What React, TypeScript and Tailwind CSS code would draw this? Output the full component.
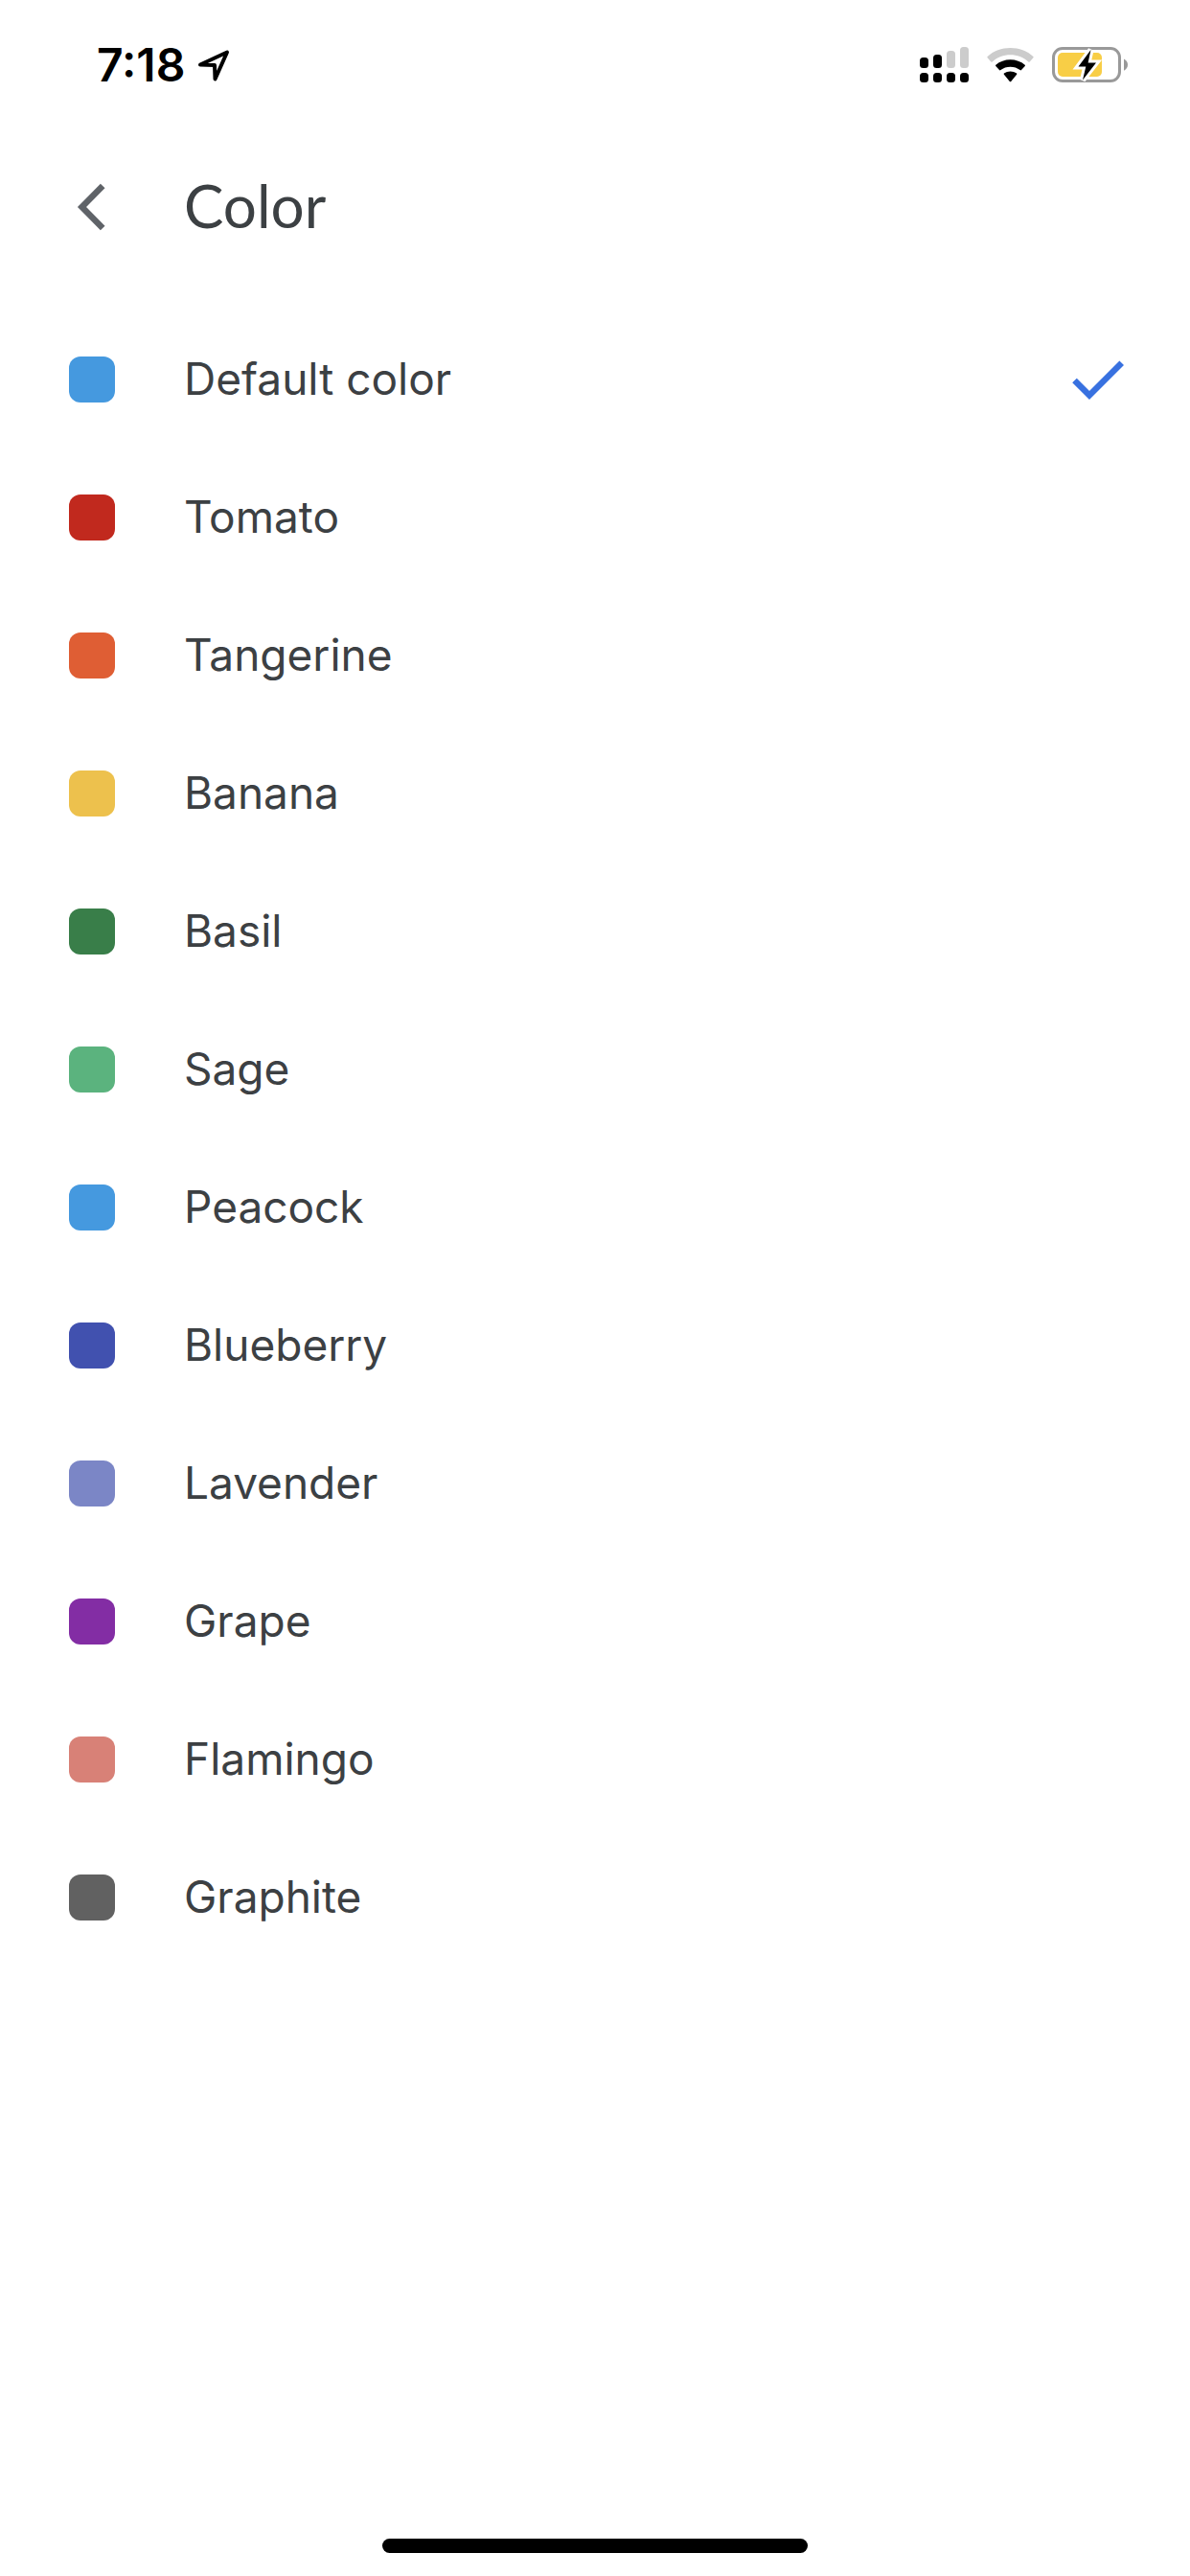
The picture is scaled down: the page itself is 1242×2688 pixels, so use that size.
import React, { FC, useState } from "react";

interface ColorOption {
    name: string
    swatch: string
}

const colors: ColorOption[] = [
    { name: 'Default color', swatch: 'bg-[#4599df]' },
    { name: 'Tomato', swatch: 'bg-[#c1291e]' },
    { name: 'Tangerine', swatch: 'bg-[#df5e34]' },
    { name: 'Banana', swatch: 'bg-[#edc14d]' },
    { name: 'Basil', swatch: 'bg-[#397e49]' },
    { name: 'Sage', swatch: 'bg-[#5bb37e]' },
    { name: 'Peacock', swatch: 'bg-[#4599df]' },
    { name: 'Blueberry', swatch: 'bg-[#4151af]' },
    { name: 'Lavender', swatch: 'bg-[#7b86c6]' },
    { name: 'Grape', swatch: 'bg-[#832da4]' },
    { name: 'Flamingo', swatch: 'bg-[#d88177]' },
    { name: 'Graphite', swatch: 'bg-[#616161]' },
]

const LocationIcon: FC = () => (
    <svg className="h-9 w-9" viewBox="0 0 36 36" fill="none" stroke="#000" strokeWidth="4" strokeLinejoin="round" aria-hidden="true">
        <path d="M4 17.5 L32 4.5 L19.5 32.5 L19 18 Z" />
    </svg>
)

const SignalIcon: FC = () => (
    <svg className="h-[38px] w-[52px]" viewBox="0 0 52 38" aria-hidden="true">
        <g fill="#ccc">
            <rect x="28" y="4" width="9" height="18" rx="3.5" />
            <rect x="42" y="0" width="9" height="22" rx="3.5" />
        </g>
        <rect x="0" y="11" width="9" height="11" rx="3.5" />
        <rect x="14" y="8" width="9" height="14" rx="3.5" />
        <rect x="0" y="27" width="9" height="10" rx="3.5" />
        <rect x="14" y="27" width="9" height="10" rx="3.5" />
        <rect x="28" y="27" width="9" height="10" rx="3.5" />
        <rect x="42" y="27" width="9" height="10" rx="3.5" />
    </svg>
)

const WifiIcon: FC = () => (
    <svg className="h-[38px] w-[50px]" viewBox="0 0 50 38" aria-hidden="true">
        <path fill="#ccc" d="M0.6 11.2 Q0 10.6 0.6 10 C7 4 15.5 1 24.5 1 C33.5 1 42 4 48.4 10 Q49 10.6 48.4 11.2 L44.7 15.4 Q44 16 43.3 15.4 C38 10.7 31.5 8.3 24.5 8.3 C17.5 8.3 11 10.7 5.7 15.4 Q5 16 4.3 15.4 Z" />
        <path d="M9.3 20 Q8.7 19.4 9.3 18.8 C13.5 15.2 18.8 13.3 24.5 13.3 C30.2 13.3 35.5 15.2 39.7 18.8 Q40.3 19.4 39.7 20 L36 24.1 Q35.3 24.8 34.6 24.1 C31.8 21.9 28.3 20.7 24.5 20.7 C20.7 20.7 17.2 21.9 14.4 24.1 Q13.7 24.8 13 24.1 Z" />
        <path d="M17.9 28.8 Q17.3 28.2 17.9 27.6 C19.8 26.2 22.1 25.5 24.5 25.5 C26.9 25.5 29.2 26.2 31.1 27.6 Q31.7 28.2 31.1 28.8 L25.2 36 Q24.5 36.7 23.8 36 Z" />
    </svg>
)

const BatteryIcon: FC = () => (
    <svg className="h-[38px] w-20" viewBox="0 0 80 38" aria-hidden="true">
        <rect x="1.5" y="1.5" width="69" height="34" rx="9.5" fill="none" stroke="#999" strokeWidth="3" />
        <rect x="6" y="6" width="46" height="25" rx="5" fill="#f8ce46" />
        <path d="M75 12.5 Q79 14.5 79 18.5 Q79 22.5 75 24.8 Z" fill="#999" />
        <path d="M40.5 3 L27.5 20.5 H35.3 L32 34.5 L46 16.5 H37.6 Z" fill="#fff" stroke="#fff" strokeWidth="6" />
        <path d="M40.5 3 L27.5 20.5 H35.3 L32 34.5 L46 16.5 H37.6 Z" />
    </svg>
)

const StatusBar: FC = () => (
    <div className="flex h-[132px] items-center justify-between pt-1 pl-[101px] pr-16 text-black">
        <div className="flex items-center gap-3">
            <span className="text-5xl leading-none font-semibold">7:18</span>
            <LocationIcon />
        </div>
        <div className="flex items-center gap-[18px]">
            <SignalIcon />
            <WifiIcon />
            <BatteryIcon />
        </div>
    </div>
)

const App: FC = () => {
    const [selected, setSelected] = useState('Default color')

    return (
        <div className="flex min-h-screen flex-col bg-white font-['Inter','Liberation_Sans',sans-serif] text-[#3c4043]">
            <StatusBar />
            <header className="flex h-[168px] items-center gap-[60px] px-[60px]">
                <button type="button" aria-label="Back">
                    <svg className="h-[72px] w-[72px]" viewBox="0 0 72 72" fill="none" stroke="#5f6368" strokeWidth="6.5" aria-hidden="true">
                        <path d="M47.2 14 L25.5 36 L47.2 58" />
                    </svg>
                </button>
                <h1 className="pb-1 font-['Lato','Liberation_Sans',sans-serif] text-[62px] leading-none">Color</h1>
            </header>
            <main className="grow pt-6">
                <div role="radiogroup" aria-label="Color">
                    {colors.map(each => (
                        <label key={each.name} className="flex h-36 items-center pl-[72px] pr-[60px]">
                            <input
                                type="radio"
                                name="color"
                                value={each.name}
                                checked={selected === each.name}
                                onChange={() => setSelected(each.name)}
                                className={`h-12 w-12 shrink-0 appearance-none rounded-xl ${each.swatch}`}
                            />
                            <span className="grow pb-0.5 pl-[72px] text-[46px] leading-none">{each.name}</span>
                            {selected === each.name ?
                                <svg className="h-[72px] w-[72px]" viewBox="0 0 72 72" fill="none" stroke="#3871e0" strokeWidth="6.5" aria-hidden="true">
                                    <path d="M11.5 37 L27 52.5 L60.7 18.8" />
                                </svg> : null
                            }
                        </label>
                    ))}
                </div>
            </main>
            <footer className="flex justify-center pb-6">
                <div className="h-[15px] w-[444px] rounded-full bg-black"></div>
            </footer>
        </div>
    );
}

export default App;
